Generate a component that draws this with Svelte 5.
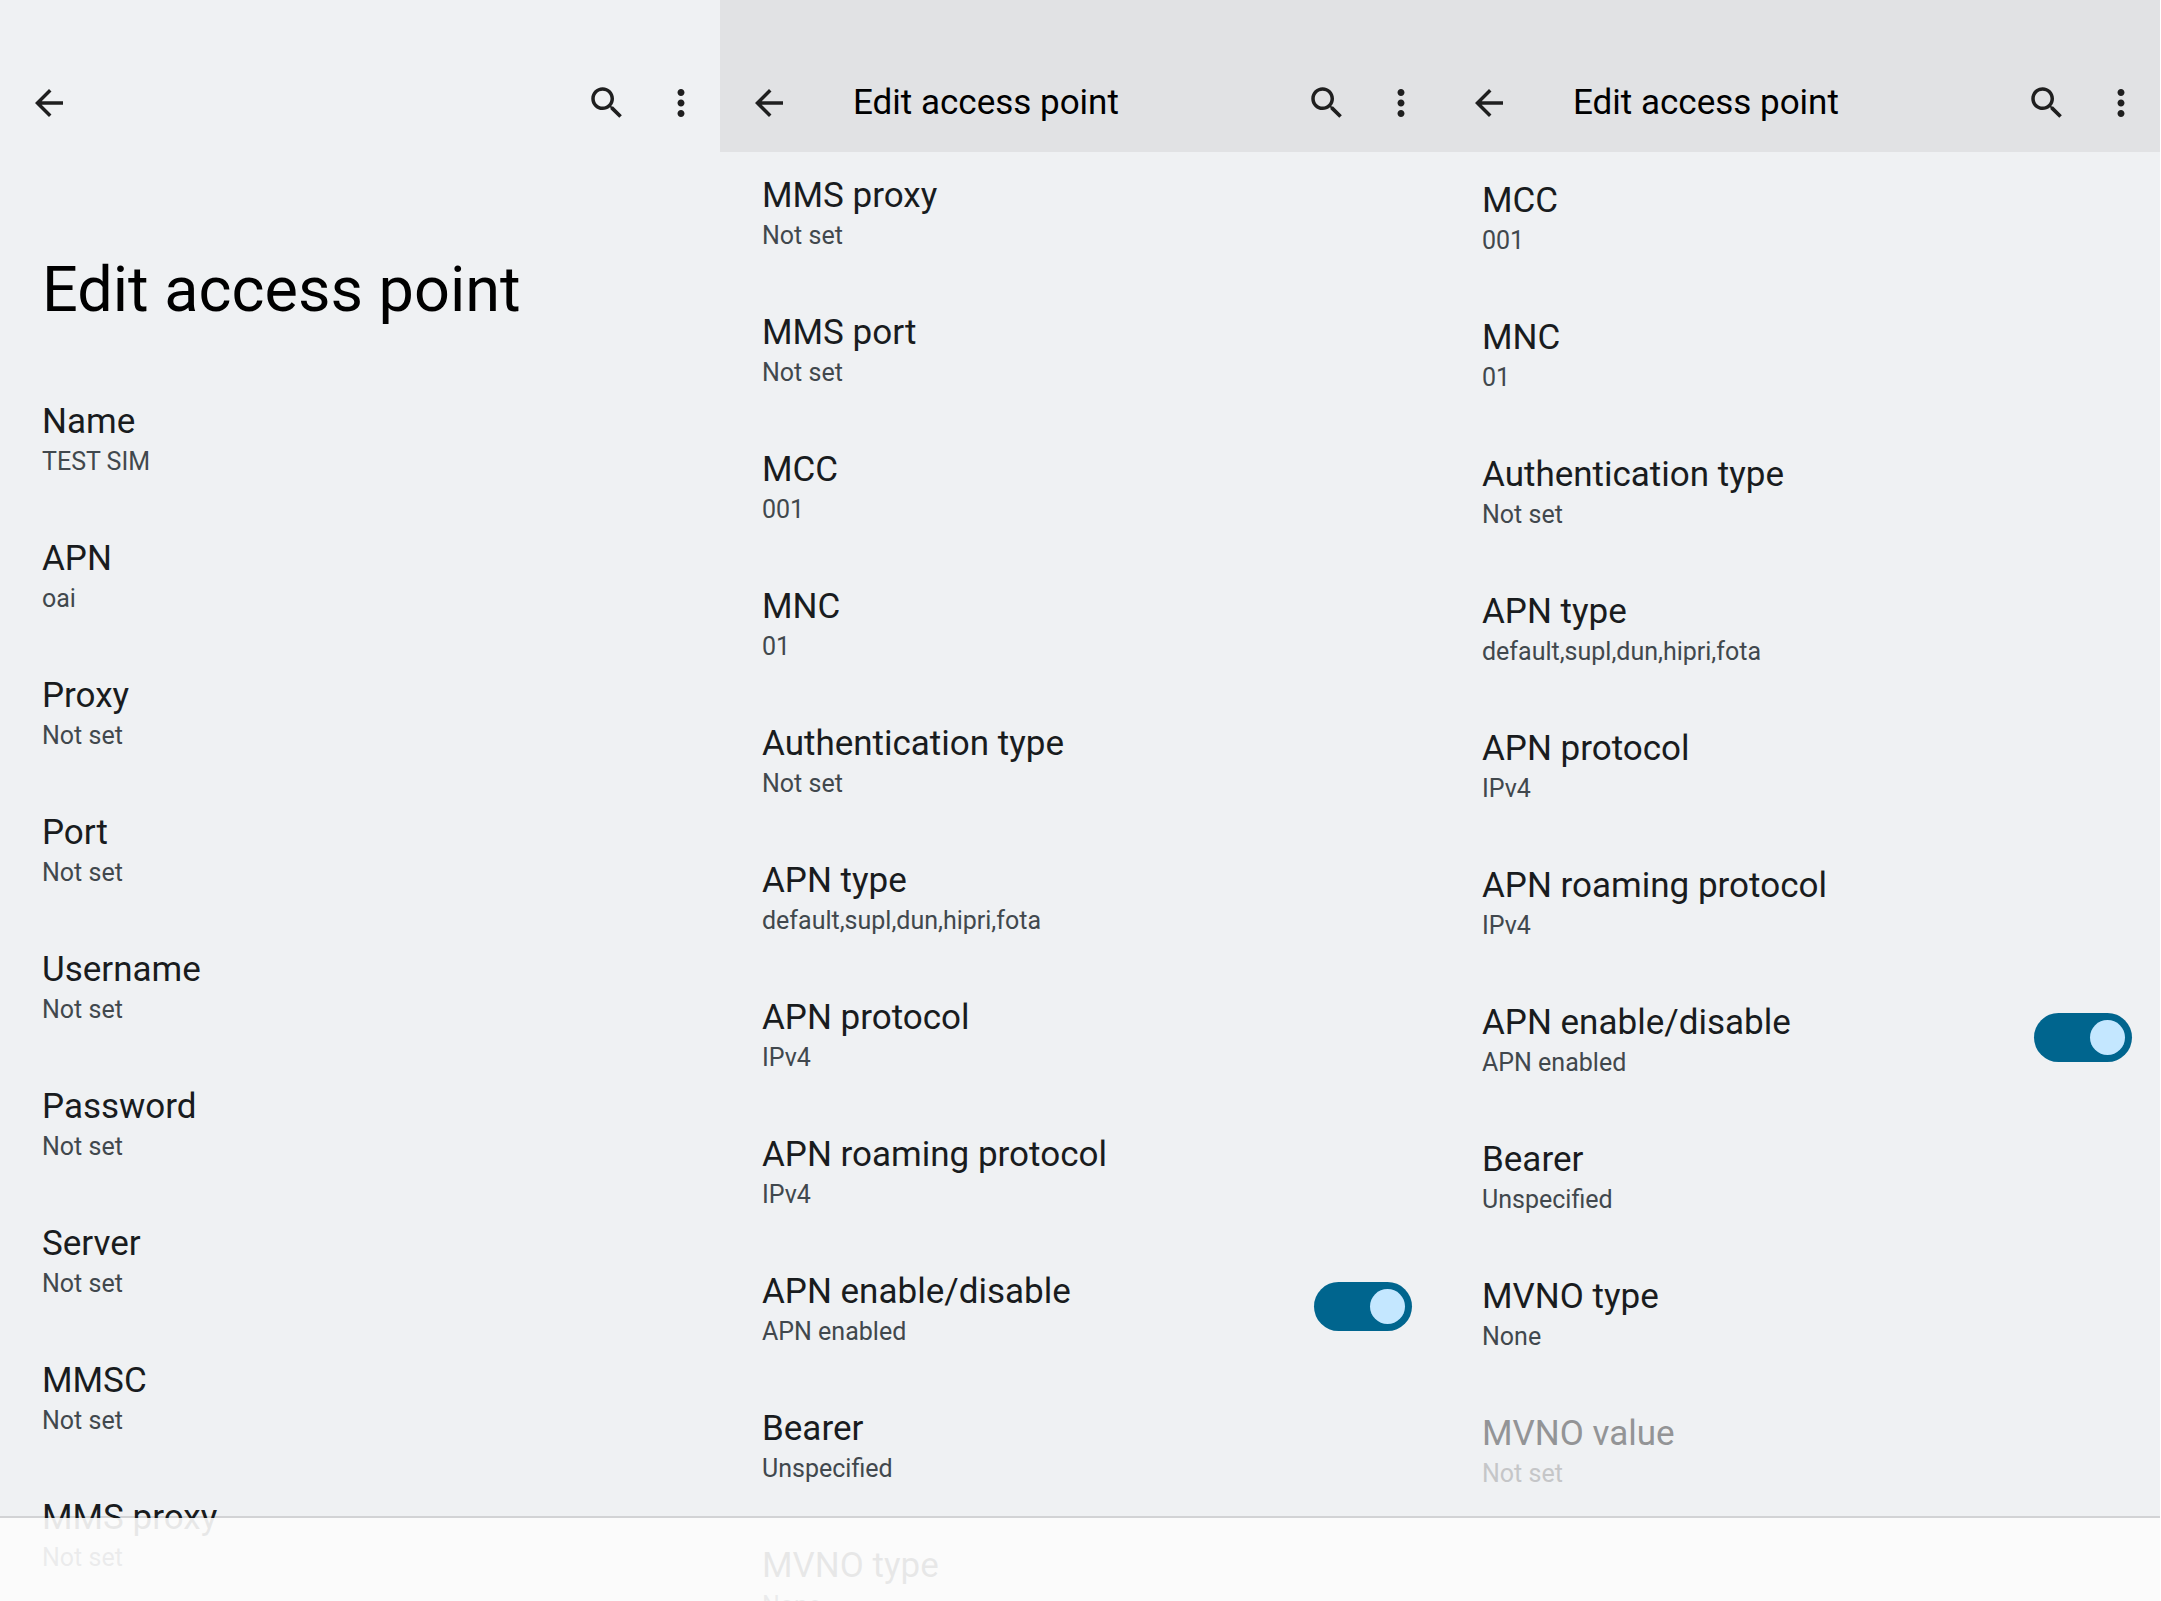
<script>
  const notSet = 'Not set';

  const panels = $state([
    {
      id: 'top',
      collapsed: false,
      items: [
        { title: 'Name', summary: 'TEST SIM' },
        { title: 'APN', summary: 'oai' },
        { title: 'Proxy', summary: notSet },
        { title: 'Port', summary: notSet },
        { title: 'Username', summary: notSet },
        { title: 'Password', summary: notSet },
        { title: 'Server', summary: notSet },
        { title: 'MMSC', summary: notSet },
        { title: 'MMS proxy', summary: notSet }
      ]
    },
    {
      id: 'middle',
      collapsed: true,
      items: [
        { title: 'MMS proxy', summary: notSet },
        { title: 'MMS port', summary: notSet },
        { title: 'MCC', summary: '001' },
        { title: 'MNC', summary: '01' },
        { title: 'Authentication type', summary: notSet },
        { title: 'APN type', summary: 'default,supl,dun,hipri,fota' },
        { title: 'APN protocol', summary: 'IPv4' },
        { title: 'APN roaming protocol', summary: 'IPv4' },
        { title: 'APN enable/disable', summary: 'APN enabled', toggle: true, on: true },
        { title: 'Bearer', summary: 'Unspecified' },
        { title: 'MVNO type', summary: 'None' }
      ]
    },
    {
      id: 'end',
      collapsed: true,
      items: [
        { title: 'MCC', summary: '001' },
        { title: 'MNC', summary: '01' },
        { title: 'Authentication type', summary: notSet },
        { title: 'APN type', summary: 'default,supl,dun,hipri,fota' },
        { title: 'APN protocol', summary: 'IPv4' },
        { title: 'APN roaming protocol', summary: 'IPv4' },
        { title: 'APN enable/disable', summary: 'APN enabled', toggle: true, on: true },
        { title: 'Bearer', summary: 'Unspecified' },
        { title: 'MVNO type', summary: 'None' },
        { title: 'MVNO value', summary: notSet, disabled: true }
      ]
    }
  ]);
</script>

<div class="screens">
  {#each panels as panel (panel.id)}
    <section class="panel {panel.id}">
      <header class="bar" class:collapsed={panel.collapsed}>
        <button class="icon" aria-label="Navigate up">
          <svg viewBox="0 0 24 24"><path d="M20 11H7.83l5.59-5.59L12 4l-8 8 8 8 1.41-1.41L7.83 13H20v-2z" /></svg>
        </button>
        <div class="bar-title">
          {#if panel.collapsed}<h1>Edit access point</h1>{/if}
        </div>
        <div class="actions">
          <button class="icon" aria-label="Search">
            <svg viewBox="0 0 24 24"><path d="M15.5 14h-.79l-.28-.27C15.41 12.59 16 11.11 16 9.5 16 5.91 13.09 3 9.5 3S3 5.91 3 9.5 5.91 16 9.5 16c1.61 0 3.09-.59 4.23-1.57l.27.28v.79l5 4.99L20.49 19l-4.99-5zm-6 0C7.01 14 5 11.99 5 9.5S7.01 5 9.5 5 14 7.01 14 9.5 11.99 14 9.5 14z" /></svg>
          </button>
          <button class="icon" aria-label="More options">
            <svg viewBox="0 0 24 24"><path d="M12 8c1.1 0 2-.9 2-2s-.9-2-2-2-2 .9-2 2 .9 2 2 2zm0 2c-1.1 0-2 .9-2 2s.9 2 2 2 2-.9 2-2-.9-2-2-2zm0 6c-1.1 0-2 .9-2 2s.9 2 2 2 2-.9 2-2-.9-2-2-2z" /></svg>
          </button>
        </div>
      </header>

      {#if !panel.collapsed}
        <h1 class="large-title">Edit access point</h1>
      {/if}

      <ul class="list">
        {#each panel.items as item}
          <li>
            {#if item.toggle}
              <label class="row">
                <span class="text">
                  <span class="title">{item.title}</span>
                  <span class="summary">{item.summary}</span>
                </span>
                <input class="switch" type="checkbox" role="switch" bind:checked={item.on} />
              </label>
            {:else}
              <button class="row" disabled={item.disabled}>
                <span class="text">
                  <span class="title">{item.title}</span>
                  <span class="summary">{item.summary}</span>
                </span>
              </button>
            {/if}
          </li>
        {/each}
      </ul>
      <div class="navigation-bar"></div>
    </section>
  {/each}
</div>

<style>
  :global(body) {
    margin: 0;
    background: #fff;
  }

  .screens {
    box-sizing: border-box;
    display: grid;
    grid-template-columns: repeat(3, 1fr);
    height: 100vh;
    padding-right: 1px;
    overflow: hidden;
    font-family: Roboto, sans-serif;
    color: #191c1e;
  }

  .panel {
    position: relative;
    min-width: 0;
    overflow: hidden;
    background: #eff1f3;
  }

  button {
    margin: 0;
    padding: 0;
    border: 0;
    background: none;
    color: inherit;
    font: inherit;
    text-align: left;
  }

  h1 {
    margin: 0;
    color: #000;
    font-weight: 400;
  }

  .bar {
    position: relative;
    z-index: 1;
    display: flex;
    align-items: center;
    height: 98px;
    padding: 54px 18px 0 28px;
  }

  .bar.collapsed {
    background: #e1e2e4;
  }

  .bar-title {
    flex: 1;
    padding-left: 63px;
  }

  .bar-title h1 {
    font-size: 35px;
    line-height: 42px;
    white-space: nowrap;
  }

  .actions {
    display: flex;
    gap: 32px;
  }

  .icon,
  .icon svg {
    display: block;
    width: 42px;
    height: 42px;
  }

  .icon svg {
    fill: #1f1f1f;
  }

  .large-title {
    padding: 101px 42px 42px;
    font-size: 63px;
    line-height: 74px;
  }

  .list {
    margin: 0;
    padding: 0;
    list-style: none;
  }

  /* Lists scrolled part of the way under the collapsed bar */
  .middle .list {
    margin-top: -9px;
  }

  .end .list {
    margin-top: -4px;
  }

  .row {
    box-sizing: border-box;
    display: flex;
    align-items: center;
    width: 100%;
    padding: 27px 28px 30px 42px;
  }

  .text {
    flex: 1;
    min-width: 0;
  }

  .title,
  .summary {
    display: block;
  }

  .title {
    font-size: 35px;
    line-height: 52px;
  }

  .summary {
    color: #41484d;
    font-size: 25px;
    line-height: 28px;
  }

  .row:disabled .title {
    color: #939496;
  }

  .row:disabled .summary {
    color: #c5c6c8;
  }

  .switch {
    appearance: none;
    box-sizing: border-box;
    display: flex;
    flex: none;
    width: 98px;
    height: 49px;
    margin: 0;
    padding: 7px;
    border-radius: 25px;
    background: #73777c;
  }

  .switch::before {
    content: '';
    width: 35px;
    height: 35px;
    border-radius: 50%;
    background: #e1e2e5;
  }

  .switch:checked {
    justify-content: flex-end;
    background: #00658e;
  }

  .switch:checked::before {
    background: #c4e7ff;
  }

  .navigation-bar {
    position: absolute;
    right: 0;
    bottom: 0;
    left: 0;
    height: 83px;
    border-top: 2px solid rgba(0, 0, 0, 0.12);
    background: rgba(252, 252, 252, 0.91);
    background-clip: padding-box;
  }
</style>
